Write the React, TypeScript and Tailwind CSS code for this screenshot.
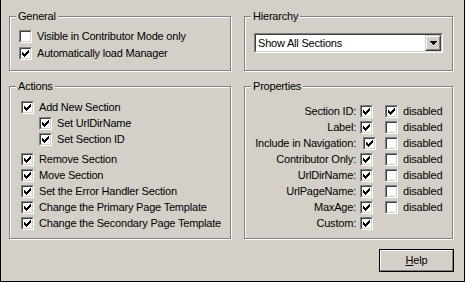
import React from "react";

const Check = () => (
  <svg width="7" height="7" viewBox="0 0 7 7" shapeRendering="crispEdges" className="block">
    <path
      d="M6 0h1v1h-1z M5 1h2v1h-2z M0 2h1v1h-1z M4 2h3v1h-3z M0 3h2v1h-2z M3 3h3v1h-3z M0 4h5v1h-5z M1 5h3v1h-3z M2 6h1v1h-1z"
      fill="#000"
    />
  </svg>
);

const Box = ({ checked, className = "" }: { checked?: boolean; className?: string }) => (
  <span
    className={
      "block w-[13px] h-[13px] shrink-0 border border-t-[#808080] border-l-[#808080] border-b-white border-r-white " +
      className
    }
  >
    <span className="flex w-[11px] h-[11px] border border-t-[#404040] border-l-[#404040] border-b-[#d4d0c8] border-r-[#d4d0c8] bg-white p-[1px]">
      {checked && <Check />}
    </span>
  </span>
);

const CheckRow = ({ label, checked, className = "" }: { label: string; checked?: boolean; className?: string }) => (
  <div className={"flex items-center h-[16px] gap-[5px] " + className}>
    <Box checked={checked} />
    <span className="leading-none">{label}</span>
  </div>
);

const Group = ({
  title,
  className = "",
  children,
}: {
  title: string;
  className?: string;
  children?: React.ReactNode;
}) => (
  <div
    className={
      "relative border border-[#808080] shadow-[inset_1px_1px_0_#fff,1px_1px_0_#fff] " + className
    }
  >
    <span className="absolute left-[6px] top-[-7px] bg-[#d4d0c8] px-[2px] leading-[13px]">{title}</span>
    {children}
  </div>
);

export default function App() {
  const props: [string, boolean | null, boolean?][] = [
    ["Section ID:", true],
    ["Label:", false],
    ["Include in Navigation:", false, true],
    ["Contributor Only:", false],
    ["UrlDirName:", false],
    ["UrlPageName:", false],
    ["MaxAge:", false],
    ["Custom:", null],
  ];
  return (
    <div
      className="w-[465px] h-[282px] bg-[#d4d0c8] border-l border-r border-b border-black text-black text-[11px] tracking-[-0.2px] pl-[8px] pt-[16px]"
      style={{ fontFamily: '"Liberation Sans", Arial, sans-serif' }}
    >
      <div className="grid grid-cols-[222px_209px] gap-x-[13px] gap-y-[15px]">
        <Group title="General" className="h-[55px] pl-[9px] pt-[11px]">
          <div className="flex flex-col gap-[1px]">
            <CheckRow label="Visible in Contributor Mode only" />
            <CheckRow label="Automatically load Manager" checked />
          </div>
        </Group>
        <Group title="Hierarchy" className="h-[55px] pl-[9px] pt-[16px]">
          <div className="w-[189px] h-[20px] border border-t-[#808080] border-l-[#808080] border-b-white border-r-white">
            <div className="flex h-full border border-t-[#404040] border-l-[#404040] border-b-[#d4d0c8] border-r-[#d4d0c8] bg-white">
              <span className="flex-1 pl-[2px] leading-[16px]">Show All Sections</span>
              <span className="w-[16px] h-[16px] border border-t-[#d4d0c8] border-l-[#d4d0c8] border-b-[#404040] border-r-[#404040]">
                <span className="flex items-center justify-center w-full h-full bg-[#d4d0c8] border border-t-white border-l-white border-b-[#808080] border-r-[#808080]">
                  <svg width="7" height="4" viewBox="0 0 7 4" shapeRendering="crispEdges">
                    <path d="M0 0h7v1h-7z M1 1h5v1h-5z M2 2h3v1h-3z M3 3h1v1h-1z" fill="#000" />
                  </svg>
                </span>
              </span>
            </div>
          </div>
        </Group>
        <Group title="Actions" className="h-[153px] pl-[11px] pt-[12px]">
          <div className="flex flex-col">
            <CheckRow label="Add New Section" checked />
            <CheckRow label="Set UrlDirName" checked className="ml-[18px]" />
            <CheckRow label="Set Section ID" checked className="ml-[18px]" />
            <div className="h-[4px]" />
            <CheckRow label="Remove Section" checked />
            <CheckRow label="Move Section" checked />
            <CheckRow label="Set the Error Handler Section" checked />
            <CheckRow label="Change the Primary Page Template" checked />
            <CheckRow label="Change the Secondary Page Template" checked />
          </div>
        </Group>
        <Group title="Properties" className="h-[153px] pt-[16px]">
          <div className="flex flex-col">
            {props.map(([label, dis, shifted]) => (
              <div key={label} className="flex items-center h-[16px]">
                <span className="w-[111px] text-right leading-none shrink-0 whitespace-nowrap">{label}</span>
                <Box checked className={shifted ? "ml-[7px]" : "ml-[4px]"} />
                {dis !== null && (
                  <>
                    <Box checked={dis} className={shifted ? "ml-[9px]" : "ml-[12px]"} />
                    <span className="ml-[5px] leading-none">disabled</span>
                  </>
                )}
              </div>
            ))}
          </div>
        </Group>
      </div>
      <div className="flex justify-end pr-[10px] mt-[10px]">
        <button className="w-[75px] h-[23px] border border-black bg-[#d4d0c8]">
          <span className="flex items-center justify-center w-full h-full border border-t-white border-l-white border-b-[#808080] border-r-[#808080]">
            <span className="leading-none">
              <span className="underline underline-offset-[1px]">H</span>elp
            </span>
          </span>
        </button>
      </div>
    </div>
  );
}
